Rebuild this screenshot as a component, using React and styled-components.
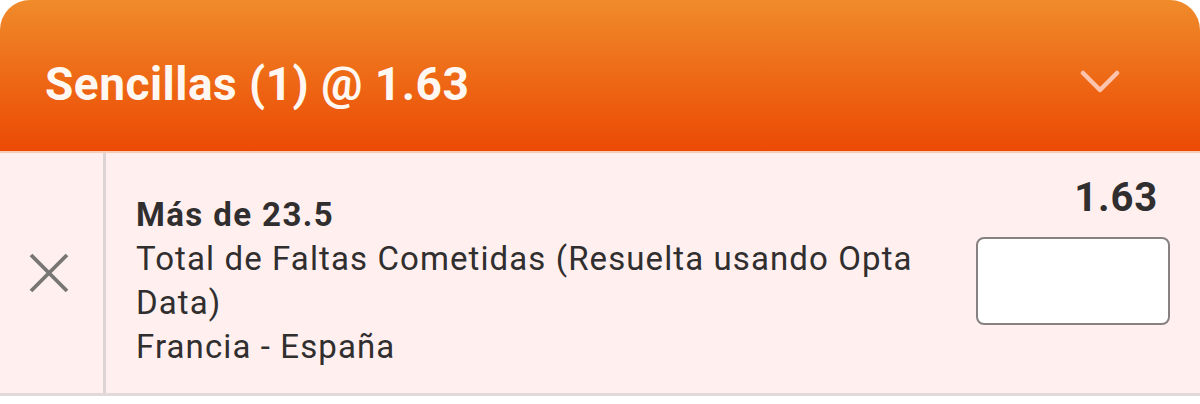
import React from "react";
import styled, { createGlobalStyle } from "styled-components";

const GlobalStyle = createGlobalStyle`
  html, body {
    margin: 0;
    padding: 0;
    background: #ffffff;
    font-family: Roboto, "Noto Sans", Arial, sans-serif;
  }
`;

const Slip = styled.section`
  width: 1200px;
`;

const Header = styled.header`
  height: 153px;
  display: flex;
  align-items: center;
  justify-content: space-between;
  padding: 16px 80px 0 45px;
  box-sizing: border-box;
  border-radius: 30px 30px 0 0;
  background: linear-gradient(180deg, #f08b2b 0%, #ee6a16 50%, #eb4a05 100%);
  border-bottom: 2px solid #f7cbb8;
`;

const Title = styled.h1`
  margin: 0;
  font-size: 46px;
  font-weight: 700;
  color: #fff8f2;
  letter-spacing: 0.5px;
`;

const Toggle = styled.button`
  display: flex;
  border: none;
  background: none;
  padding: 0;
  cursor: pointer;
`;

const Bet = styled.div`
  display: flex;
  background: #fff0ef;
  border-bottom: 3px solid #e2dada;
`;

const RemoveCell = styled.div`
  width: 106px;
  flex: none;
  box-sizing: border-box;
  padding-right: 6px;
  display: flex;
  align-items: center;
  justify-content: center;
  border-right: 3px solid #ddd5d5;
`;

const Info = styled.div`
  flex: 1;
  display: flex;
  gap: 30px;
  padding: 40px 30px 24px 30px;
  color: #302e2e;
`;

const Details = styled.div`
  flex: 1;
  font-size: 33px;
  line-height: 44px;
`;

const Line = styled.div`
  font-weight: ${(p) => (p.$bold ? 700 : 400)};
  letter-spacing: ${(p) => (p.$bold ? "1.4px" : "1.1px")};
`;

const OddsCol = styled.div`
  width: 194px;
  flex: none;
  display: flex;
  flex-direction: column;
  align-items: flex-end;
  margin-top: -15px;
`;

const Odds = styled.div`
  font-size: 40px;
  line-height: 40px;
  font-weight: 700;
  letter-spacing: 0.8px;
  padding-right: 12px;
`;

const Stake = styled.input`
  margin-top: 19px;
  width: 194px;
  height: 88px;
  box-sizing: border-box;
  border: 2.5px solid #878181;
  border-radius: 8px;
  background: #fff;
  font-size: 30px;
  outline: none;
`;

const Chevron = () => (
  <svg width="40" height="30" viewBox="0 0 40 30" fill="none">
    <path d="M3 4 L20 21 L37 4" stroke="#fcc3ad" strokeWidth="4.5" strokeLinecap="round" strokeLinejoin="round" />
  </svg>
);

const Cross = () => (
  <svg width="40" height="40" viewBox="0 0 40 40" fill="none">
    <path d="M2 2 L38 38 M38 2 L2 38" stroke="#787575" strokeWidth="3.8" />
  </svg>
);

export default function App() {
  return (
    <Slip>
      <GlobalStyle />
      <Header>
        <Title>Sencillas (1) @ 1.63</Title>
        <Toggle aria-label="Contraer">
          <Chevron />
        </Toggle>
      </Header>
      <Bet>
        <RemoveCell>
          <Cross />
        </RemoveCell>
        <Info>
          <Details>
            <Line $bold>Más de 23.5</Line>
            <Line>Total de Faltas Cometidas (Resuelta usando Opta Data)</Line>
            <Line>Francia - España</Line>
          </Details>
          <OddsCol>
            <Odds>1.63</Odds>
            <Stake type="text" />
          </OddsCol>
        </Info>
      </Bet>
    </Slip>
  );
}
